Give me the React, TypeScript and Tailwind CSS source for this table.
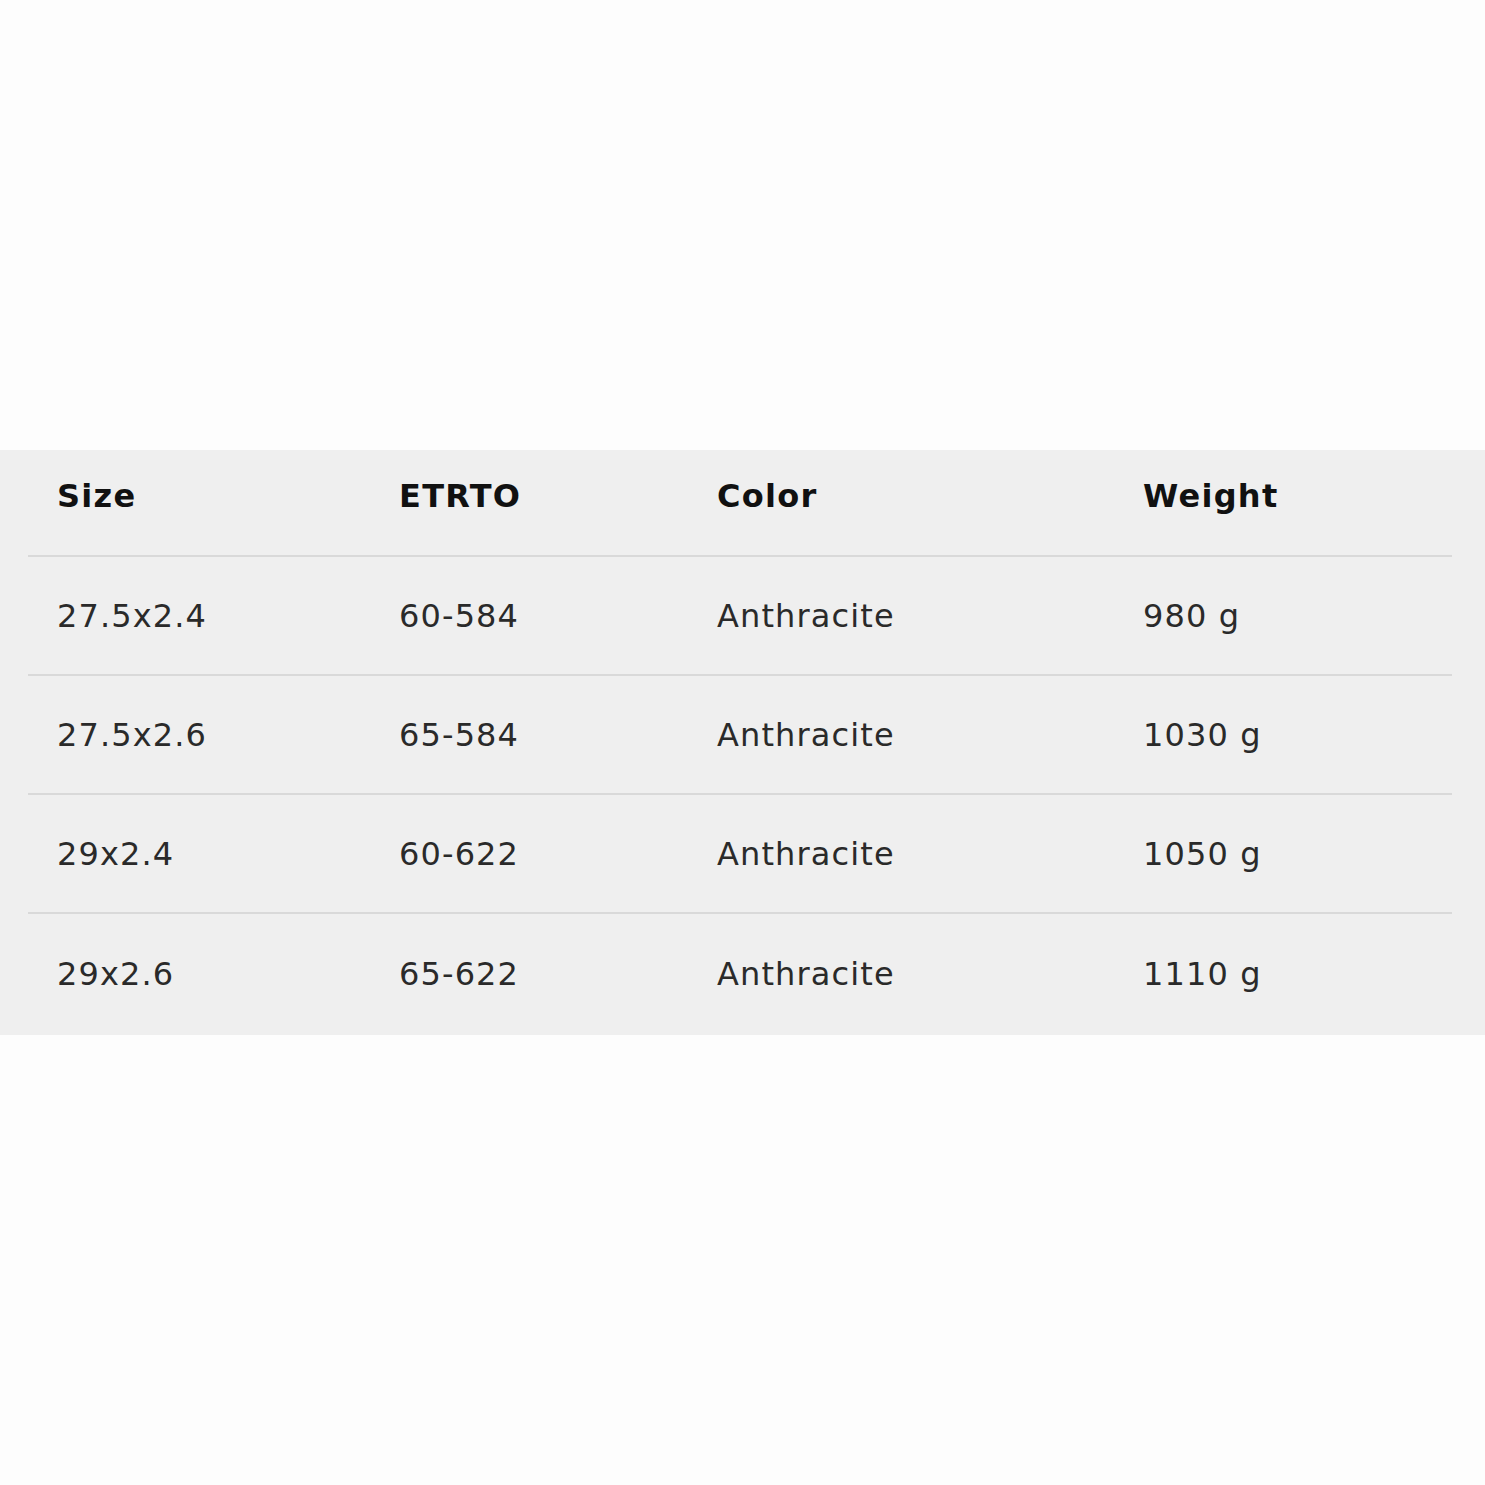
import React from "react";

const rows = [
  ["27.5x2.4", "60-584", "Anthracite", "980 g"],
  ["27.5x2.6", "65-584", "Anthracite", "1030 g"],
  ["29x2.4", "60-622", "Anthracite", "1050 g"],
  ["29x2.6", "65-622", "Anthracite", "1110 g"],
];

const cols = "grid grid-cols-[342px_318px_426px_1fr] pl-[29px]";

export default function App() {
  return (
    <div className="min-h-[1485px] bg-[#fdfdfd] pt-[450px]" style={{ fontFamily: '"DejaVu Sans", "Open Sans", sans-serif' }}>
      <div className="bg-[#efefef] pl-[28px] pr-[33px] h-[585px]">
        <div className={`${cols} h-[107px] items-center pb-[14px] border-b-2 border-[#d9d9d9] text-[32px] tracking-[0.04em] font-bold text-[#111]`}>
          <div>Size</div>
          <div>ETRTO</div>
          <div>Color</div>
          <div>Weight</div>
        </div>
        {rows.map((r, i) => (
          <div
            key={i}
            className={`${cols} h-[119px] items-center text-[32px] tracking-[0.035em] text-[#2a2a2a] ${i < rows.length - 1 ? "border-b-2 border-[#d9d9d9]" : ""}`}
          >
            {r.map((c, j) => (
              <div key={j}>{c}</div>
            ))}
          </div>
        ))}
      </div>
    </div>
  );
}
